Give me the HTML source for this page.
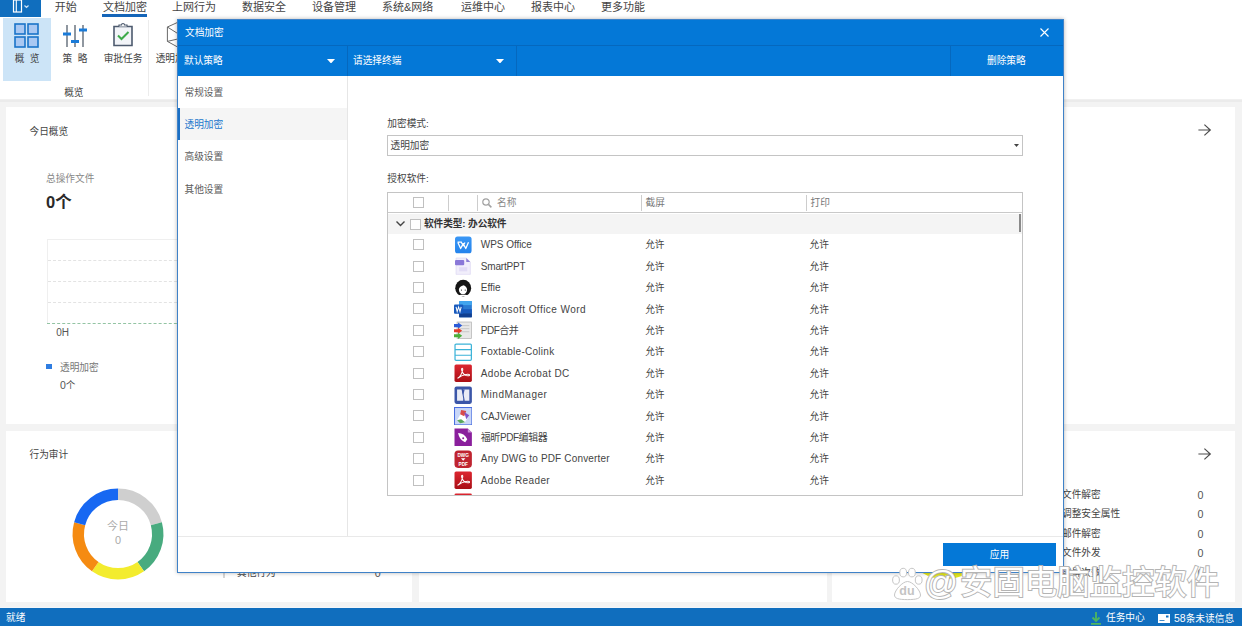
<!DOCTYPE html>
<html lang="zh-CN"><head><meta charset="utf-8"><title>文档加密</title>
<style>
*{box-sizing:border-box;margin:0;padding:0}
html,body{width:1242px;height:626px;overflow:hidden;background:#f3f3f3}
body{font-family:"Liberation Sans","Noto Sans CJK SC",sans-serif;font-size:9.7px;color:#444;position:relative}
.abs{position:absolute}
.t{position:absolute;white-space:nowrap;line-height:1}
/* top menu */
#menubar{position:absolute;left:0;top:0;width:1242px;height:17px;background:#fff}
#appbtn{position:absolute;left:0;top:0;width:41px;height:16.500px;background:#106ebe}
.mi{position:absolute;top:.7px;font-size:11px;line-height:13px;color:#444;white-space:nowrap}
#ribbon{position:absolute;left:0;top:17px;width:1242px;height:82px;background:#fff;border-bottom:1px solid #f0f0f0;box-sizing:content-box}
#rband{position:absolute;left:0;top:99.500px;width:1242px;height:2px;background:#ebebeb}
.rl{position:absolute;top:36px;font-size:9.7px;line-height:11px;color:#444;white-space:nowrap;text-align:center}
.card{position:absolute;background:#fff}
#status{position:absolute;left:0;top:607px;width:1242px;height:19px;border-top:1px solid #f3f7fb;background:#106ebe;color:#fff;font-size:9.7px}
/* dialog */
#dlg{position:absolute;left:177px;top:19px;width:887px;height:554px;background:#fff;border:1px solid #3f82c8;box-shadow:0 0 4px rgba(0,0,0,.3)}
#ttl{position:absolute;left:0;top:0;width:885px;height:25px;background:#0478d7}
#tb{position:absolute;left:0;top:25px;width:885px;height:31px;background:#0478d7;border-top:1px solid #0568be}
.tbsep{position:absolute;top:0;width:1px;height:30px;background:#0568be}
.w{color:#fff}
#side{position:absolute;left:0;top:56px;width:170px;height:460px;border-right:1px solid #e6e6e6}
.si{position:absolute;left:0;width:169px;height:32px;line-height:34px;padding-left:6.500px;font-size:9.7px;color:#5c5c5c}
.si.sel{background:#f5f5f5;color:#2277cc;border-left:2px solid #1a6fc4;padding-left:4.500px}
#foot{position:absolute;left:0;top:516px;width:885px;height:36px;border-top:1px solid #e9e9e9}
#apply{position:absolute;left:765px;top:6px;width:113px;height:23px;background:#0478d7;color:#fff;text-align:center;line-height:23px;font-size:9.7px}
#combo{position:absolute;left:209px;top:115px;width:636px;height:21px;border:1px solid #c4c4c4;background:#fff}
#grid{position:absolute;left:209px;top:172px;width:636px;height:304px;border:1px solid #c4c4c4;background:#fff;overflow:hidden}
#ghead{position:absolute;left:0;top:0;width:634px;height:20px;border-bottom:1px solid #c9c9c9}
.hs{position:absolute;top:2px;width:1px;height:16px;background:#cdcdcd}
.cb{position:absolute;width:11px;height:11px;border:1px solid #c0c0c0;background:#fff}
#grp{position:absolute;left:0;top:21px;width:634px;height:20px;background:#f4f4f4}
.row{position:absolute;left:0;width:633px;height:21.42px;font-size:10px;color:#444}
.row .ic{position:absolute;left:65.600px;top:1.400px;width:18.400px;height:18.400px}
.row .ic svg{width:18.400px;height:18.400px;display:block}
.row .nm{position:absolute;left:92.800px;top:0;line-height:21.42px;white-space:nowrap}
.row .c2{position:absolute;left:257.200px;top:0;line-height:21.42px;font-size:9.7px}
.row .c3{position:absolute;left:421.600px;top:0;line-height:21.42px;font-size:9.7px}
</style></head><body>
<!-- MENU -->
<div id="menubar">
<div id="appbtn"><svg class="abs" style="left:12px;top:-.5px" width="22" height="14" viewBox="0 0 22 14"><rect x="1.500" y="0" width="8" height="12" fill="none" stroke="#fff" stroke-width="1.200"/><path d="M4.300 0v12" stroke="#fff" stroke-width="1.100"/><path d="M12.500 5.500l2 2 2-2" stroke="#cfe2f5" stroke-width="1.200" fill="none"/></svg></div>
<span class="mi" style="left:54.800px">开始</span>
<span class="mi" style="left:103px">文档加密</span>
<div class="abs" style="left:102px;top:14px;width:45px;height:2.500px;background:#1565b8"></div>
<span class="mi" style="left:172px">上网行为</span>
<span class="mi" style="left:242px">数据安全</span>
<span class="mi" style="left:312px">设备管理</span>
<span class="mi" style="left:382px">系统&amp;网络</span>
<span class="mi" style="left:461px">运维中心</span>
<span class="mi" style="left:531px">报表中心</span>
<span class="mi" style="left:601px">更多功能</span>
</div>
<!-- RIBBON -->
<div id="ribbon">
<div class="abs" style="left:3px;top:1px;width:48px;height:63px;background:#cce4f7"></div>
<svg class="abs" style="left:14px;top:6px" width="25" height="25" viewBox="0 0 25 25"><g fill="#a9c8f2" stroke="#1a74c8" stroke-width="1.600"><rect x="1" y="1" width="10" height="10"/><rect x="14" y="1" width="10" height="10"/><rect x="1" y="14" width="10" height="10"/><rect x="14" y="14" width="10" height="10"/></g></svg>
<span class="rl" style="left:3px;width:48px;word-spacing:2.600px">概 览</span>
<svg class="abs" style="left:62px;top:7px" width="26" height="25" viewBox="0 0 26 25"><path d="M5 1v22M13 1v22M21 1v22" stroke="#55606e" stroke-width="1.300"/><path d="M1 10h8M9 17.500h8M17 6h8" stroke="#1a7bd8" stroke-width="3"/></svg>
<span class="rl" style="left:51px;width:48px;word-spacing:3px">策 略</span>
<svg class="abs" style="left:112px;top:5px" width="22" height="26" viewBox="0 0 22 26"><path d="M2 4.500h18v19H2z" fill="#f2f4f8" stroke="#4d5a6e" stroke-width="1.600"/><path d="M7 4.500V3h2.500a1.500 1.500 0 0 1 3 0H15v1.500" fill="#fff" stroke="#4d5a6e" stroke-width="1.200"/><path d="M6 13.500l3.500 3.500 7-7" stroke="#3daa4a" stroke-width="2" fill="none"/></svg>
<span class="rl" style="left:98px;width:50px">审批任务</span>
<div class="abs" style="left:148px;top:3px;width:1px;height:76px;background:#ececec"></div>
<svg class="abs" style="left:164px;top:3px" width="24" height="30" viewBox="0 0 24 30"><path d="M3.400 7v14.400M3.400 7l12-5.400M3.400 7l12 7.600M3.400 21.400l12-2.800M3.400 21.400l12 6.600" fill="none" stroke="#6a6a6a" stroke-width="1"/></svg>
<span class="rl" style="left:155.700px;text-align:left">透明加密</span>
<span class="t" style="left:64.200px;top:71px;font-size:9.7px;color:#444">概览</span>
</div>
<div id="rband"></div>
<!-- BACKGROUND CARDS -->
<div class="card" style="left:6px;top:107px;width:1229px;height:317px"></div>
<div class="card" style="left:6px;top:431px;width:406px;height:170.600px"></div>
<div class="card" style="left:418.500px;top:431px;width:408px;height:170.600px"></div>
<div class="card" style="left:832px;top:431px;width:403px;height:170.600px"></div>
<span class="t" style="left:29.500px;top:127px;font-size:9.7px;color:#444">今日概览</span>
<span class="t" style="left:46px;top:173.500px;font-size:9.7px;color:#888">总操作文件</span>
<span class="t" style="left:46px;top:194px;font-size:16.500px;font-weight:bold;color:#2a2a2a">0个</span>
<div class="abs" style="left:47px;top:239px;width:140px;height:84px;border:1px solid #efefef;border-bottom:none"></div>
<div class="abs" style="left:48px;top:260px;width:139px;height:0;border-top:1px dashed #e3e3e3"></div>
<div class="abs" style="left:48px;top:281px;width:139px;height:0;border-top:1px dashed #e3e3e3"></div>
<div class="abs" style="left:48px;top:302px;width:139px;height:0;border-top:1px dashed #e3e3e3"></div>
<div class="abs" style="left:47px;top:322.500px;width:140px;height:0;border-top:1.500px dashed #93c4a3"></div>
<span class="t" style="left:56.300px;top:327.500px;font-size:10px;color:#555">0H</span>
<div class="abs" style="left:46px;top:364px;width:6px;height:5px;background:#2f7de1"></div>
<span class="t" style="left:60px;top:363.300px;font-size:9.7px;color:#777">透明加密</span>
<span class="t" style="left:60px;top:379.500px;font-size:9.7px;color:#555"><span style="font-size:10.500px">0</span>个</span>
<svg class="abs" style="left:1197px;top:123.400px" width="16" height="14" viewBox="0 0 16 14"><path d="M1.400 7h11.900M7.400 1.600L13.300 7l-5.900 5.400" stroke="#4c4c4c" stroke-width="1.200" fill="none"/></svg>
<svg class="abs" style="left:1197px;top:447.300px" width="16" height="14" viewBox="0 0 16 14"><path d="M1.400 7h11.900M7.400 1.600L13.300 7l-5.900 5.400" stroke="#4c4c4c" stroke-width="1.200" fill="none"/></svg>
<span class="t" style="left:29.500px;top:450px;font-size:9.7px;color:#444">行为审计</span>
<svg class="abs" style="left:69.700px;top:486.200px" width="96" height="96" viewBox="-48.300 -48.300 96.600 96.600">
<g fill="none" stroke-width="11.500">
<path d="M0 -40A40 40 0 0 1 38.600 -10.400" stroke="#cfcfcf"/>
<path d="M38.600 -10.400A40 40 0 0 1 22.900 32.800" stroke="#48ab7f"/>
<path d="M22.900 32.800A40 40 0 0 1 -22.900 32.800" stroke="#f3ec2e"/>
<path d="M-22.900 32.800A40 40 0 0 1 -38.600 -10.400" stroke="#f58b12"/>
<path d="M-38.600 -10.400A40 40 0 0 1 0 -40" stroke="#1768f2"/>
</g>
<text x="0" y="-4" text-anchor="middle" font-size="11" fill="#aaa">今日</text>
<text x="0" y="10" text-anchor="middle" font-size="11" fill="#aaa">0</text>
</svg>
<div class="abs" style="left:222.700px;top:569px;width:2px;height:9px;background:#d6d6d6"></div>
<span class="t" style="left:237px;top:568px;font-size:9.7px;color:#444">其他行为</span>
<span class="t" style="left:374.800px;top:568px;font-size:10.700px;color:#555">0</span>
<span class="t" style="left:1062px;top:490px;font-size:9.7px;color:#444">文件解密</span><span class="t" style="left:1197.500px;top:489.5px;font-size:10.700px;color:#555">0</span>
<span class="t" style="left:1062px;top:509px;font-size:9.7px;color:#444">调整安全属性</span><span class="t" style="left:1197.500px;top:508.5px;font-size:10.700px;color:#555">0</span>
<span class="t" style="left:1062px;top:529px;font-size:9.7px;color:#444">邮件解密</span><span class="t" style="left:1197.500px;top:528.5px;font-size:10.700px;color:#555">0</span>
<span class="t" style="left:1062px;top:548px;font-size:9.7px;color:#444">文件外发</span><span class="t" style="left:1197.500px;top:547.5px;font-size:10.700px;color:#555">0</span>
<span class="t" style="left:1062px;top:568px;font-size:9.7px;color:#444">截屏次数</span><span class="t" style="left:1197.500px;top:567.5px;font-size:10.700px;color:#555">0</span>
<svg class="abs" style="left:895px;top:485px" width="100" height="100" viewBox="-50 -50 100 100"><circle cx="0" cy="0" r="38.500" fill="none" stroke="#e2e61e" stroke-width="11.500"/></svg>
<!-- STATUS -->
<div id="status"><span class="t" style="left:6px;top:5px">就绪</span>
<svg class="abs" style="left:1089.500px;top:3.500px" width="12" height="13" viewBox="0 0 12 13"><path d="M6 0v9M2.500 5.500L6 9l3.500-3.500M1 11.800h10" stroke="#4db660" stroke-width="1.800" fill="none"/></svg>
<span class="t" style="left:1106px;top:5px">任务中心</span>
<svg class="abs" style="left:1158px;top:5.500px" width="12" height="9" viewBox="0 0 12 9"><rect width="12" height="9" fill="#fff"/><rect x="8" y="1.500" width="2.500" height="2" fill="#106ebe"/><path d="M1.500 6.500h5" stroke="#106ebe" stroke-width=".8"/></svg>
<span class="t" style="left:1174px;top:5px"><span style="font-size:10.500px">58</span>条未读信息</span>
</div>
<!-- DIALOG -->
<div id="dlg">
<div id="ttl"><span class="t w" style="left:7px;top:8px;font-size:9.7px">文档加密</span>
<svg class="abs" style="left:862px;top:8px" width="9" height="9" viewBox="0 0 9 9"><path d="M.5 .5l8 8M8.500 .5l-8 8" stroke="#fff" stroke-width="1.100"/></svg></div>
<div id="tb">
<span class="t w" style="left:6px;top:10px;font-size:9.7px">默认策略</span>
<svg class="abs" style="left:148.700px;top:12.600px" width="8" height="4.500" viewBox="0 0 9 5"><path d="M0 0h9L4.500 5z" fill="#fff"/></svg>
<div class="tbsep" style="left:169px"></div>
<span class="t w" style="left:175px;top:10px;font-size:9.7px">请选择终端</span>
<svg class="abs" style="left:317.700px;top:12.600px" width="8" height="4.500" viewBox="0 0 9 5"><path d="M0 0h9L4.500 5z" fill="#fff"/></svg>
<div class="tbsep" style="left:338px"></div>
<div class="tbsep" style="left:772px"></div>
<span class="t w" style="left:809px;top:10px;font-size:9.7px">删除策略</span>
</div>
<div id="side">
<div class="si" style="top:0">常规设置</div>
<div class="si sel" style="top:32px">透明加密</div>
<div class="si" style="top:64px">高级设置</div>
<div class="si" style="top:97px">其他设置</div>
</div>
<span class="t" style="left:209.300px;top:98.500px;font-size:9.7px;color:#444">加密模式:</span>
<div id="combo"><span class="t" style="left:2.500px;top:5px;font-size:9.7px;color:#444">透明加密</span>
<svg class="abs" style="left:626px;top:8px" width="5" height="3" viewBox="0 0 5 3"><path d="M0 0h5L2.500 3z" fill="#444"/></svg></div>
<span class="t" style="left:209.300px;top:153.500px;font-size:9.7px;color:#444">授权软件:</span>
<div id="grid">
<div id="ghead">
<span class="cb" style="left:25px;top:4px"></span>
<div class="hs" style="left:60px"></div><div class="hs" style="left:89px"></div><div class="hs" style="left:253px"></div><div class="hs" style="left:418px"></div>
<svg class="abs" style="left:94px;top:5px" width="10" height="10" viewBox="0 0 10 10"><circle cx="4" cy="4" r="3.200" fill="none" stroke="#a2a2a2" stroke-width="1.200"/><path d="M6.400 6.400l3 3" stroke="#a2a2a2" stroke-width="1.500"/></svg>
<span class="t" style="left:109px;top:5px;font-size:9.7px;color:#888">名称</span>
<span class="t" style="left:257.500px;top:5px;font-size:9.7px;color:#777">截屏</span>
<span class="t" style="left:422.500px;top:5px;font-size:9.7px;color:#777">打印</span>
</div>
<div id="grp">
<svg class="abs" style="left:8px;top:7px" width="9" height="6" viewBox="0 0 9 6"><path d="M.5 .5l4 4 4-4" stroke="#444" stroke-width="1.400" fill="none"/></svg>
<span class="cb" style="left:22px;top:5px"></span>
<span class="t" style="left:36px;top:5px;font-size:9.7px;font-weight:bold;color:#333;letter-spacing:-.1px">软件类型: 办公软件</span>
</div>
<div id="rows" style="position:absolute;left:0;top:-193px">
<div class="row" style="top:234.29px">
<span class="cb" style="left:24.500px;top:4.800px"></span>
<span class="ic"><svg viewBox="0 0 18 18"><defs><linearGradient id="gw" x1="0" y1="0" x2="0" y2="1"><stop offset="0" stop-color="#3a97f5"/><stop offset="1" stop-color="#2483ec"/></linearGradient></defs><rect x="1" y="0.500" width="16.200" height="16.500" rx="2.500" fill="url(#gw)"/><path d="M3.500 6h4.200M3.800 6.300l2.700 6 2.500-4.800 2.500 4.800 2.700-6.300M7.300 6.300L9 9.500l1.700-3.200" stroke="#fff" stroke-width="1.250" fill="none" stroke-linejoin="round"/></svg></span>
<span class="nm" style="letter-spacing:-0.05px">WPS Office</span><span class="c2">允许</span><span class="c3">允许</span></div><div class="row" style="top:255.71px">
<span class="cb" style="left:24.500px;top:4.800px"></span>
<span class="ic"><svg viewBox="0 0 18 18"><path d="M2 1h10l4 4v12H2z" fill="#f1eefb" stroke="#d8d2f0" stroke-width=".6"/><path d="M12 1l4 4h-4z" fill="#8e7fd6"/><rect x="1" y="3" width="9" height="5" rx="1" fill="#8a78d8"/><rect x="5" y="10" width="8" height="4" fill="#e2dcf6"/></svg></span>
<span class="nm" style="letter-spacing:-0.19px">SmartPPT</span><span class="c2">允许</span><span class="c3">允许</span></div><div class="row" style="top:277.13px">
<span class="cb" style="left:24.500px;top:4.800px"></span>
<span class="ic"><svg viewBox="0 0 18 18"><ellipse cx="9" cy="9" rx="7.800" ry="8.200" fill="#161616"/><path d="M4.800 10.500c0-2 1.600-3.600 4.700-4.300 1.800.8 3.300 2.300 3.300 4.300 0 2.600-1.800 4.500-4 4.500s-4-1.900-4-4.500z" fill="#fff"/><path d="M3 17c1.500-1.200 3.500-1.600 6-1.600s4.500.4 6 1.600z" fill="#fff"/><circle cx="7.300" cy="10.800" r=".6" fill="#333"/><circle cx="11" cy="10.800" r=".6" fill="#333"/></svg></span>
<span class="nm" style="letter-spacing:-0.04px">Effie</span><span class="c2">允许</span><span class="c3">允许</span></div><div class="row" style="top:298.55px">
<span class="cb" style="left:24.500px;top:4.800px"></span>
<span class="ic"><svg viewBox="0 0 18 18"><rect x="5" y="1" width="12.5" height="16" rx="1" fill="#2b7cd3"/><rect x="5" y="1" width="12.5" height="4" fill="#41a5ee"/><rect x="5" y="9" width="12.5" height="4" fill="#185abd"/><rect x="5" y="13" width="12.5" height="4" fill="#103f91"/><rect x="0" y="4.5" width="9" height="9" rx="1" fill="#185abd"/><path d="M2 6.8l1.1 4.6 1.4-4.6 1.4 4.6L7 6.8" stroke="#fff" stroke-width="1" fill="none"/></svg></span>
<span class="nm" style="letter-spacing:0.45px">Microsoft Office Word</span><span class="c2">允许</span><span class="c3">允许</span></div><div class="row" style="top:319.97px">
<span class="cb" style="left:24.500px;top:4.800px"></span>
<span class="ic"><svg viewBox="0 0 18 18"><rect x="3" y="1" width="14" height="16" fill="#e8e8e8" stroke="#b0b0b0" stroke-width=".7"/><rect x="6" y="4" width="9" height="1" fill="#c8c8c8"/><rect x="6" y="7" width="9" height="1" fill="#c8c8c8"/><rect x="6" y="10" width="9" height="1" fill="#c8c8c8"/><path d="M0 3h4V1.5L8 4.5 4 7.5V6H0z" fill="#2a5bd8"/><path d="M0 8h4V6.5L8 9.500 4 12.500V11H0z" fill="#e23c2c"/><path d="M0 13h4v-1.500L8 14.500 4 17.500V16H0z" fill="#4caf3a"/></svg></span>
<span class="nm" style="letter-spacing:-0.52px">PDF合并</span><span class="c2">允许</span><span class="c3">允许</span></div><div class="row" style="top:341.39px">
<span class="cb" style="left:24.500px;top:4.800px"></span>
<span class="ic"><svg viewBox="0 0 18 18"><rect x="1" y="1" width="16" height="16" rx="1" fill="#fff" stroke="#3bb3d8" stroke-width="1.2"/><path d="M1 6.500h16M1 12h16" stroke="#3bb3d8" stroke-width="1.200"/></svg></span>
<span class="nm" style="letter-spacing:0.28px">Foxtable-Colink</span><span class="c2">允许</span><span class="c3">允许</span></div><div class="row" style="top:362.81px">
<span class="cb" style="left:24.500px;top:4.800px"></span>
<span class="ic"><svg viewBox="0 0 18 18"><defs><linearGradient id="ga" x1="0" y1="0" x2="0" y2="1"><stop offset="0" stop-color="#dc2630"/><stop offset="1" stop-color="#a90f16"/></linearGradient></defs><rect x="0.500" y="0.500" width="17" height="17" rx="1.500" fill="url(#ga)"/><path d="M3.500 14c2-1 4-4 5-8 .5-2.500-1.500-2.500-1 0 .6 3 3.500 6 7 5.500 1.500-.5.500-1.800-1.500-1.500-3 .4-7 2-9.500 4z" stroke="#fff" stroke-width="1" fill="none"/></svg></span>
<span class="nm" style="letter-spacing:0.38px">Adobe Acrobat DC</span><span class="c2">允许</span><span class="c3">允许</span></div><div class="row" style="top:384.23px">
<span class="cb" style="left:24.500px;top:4.800px"></span>
<span class="ic"><svg viewBox="0 0 18 18"><rect x="0.500" y="0.500" width="17" height="17" rx="2" fill="#3b56a8"/><path d="M3 3.500h4.500L9 12V3.500h0L10.500 3.500H15V14.500H10.500L9 6v8.500H3z" fill="#e9ecf5"/><path d="M7.500 3.500L9 9l1.500-5.500z" fill="#3b56a8"/></svg></span>
<span class="nm" style="letter-spacing:0.49px">MindManager</span><span class="c2">允许</span><span class="c3">允许</span></div><div class="row" style="top:405.65px">
<span class="cb" style="left:24.500px;top:4.800px"></span>
<span class="ic"><svg viewBox="0 0 18 18"><rect x="0.500" y="0.500" width="17" height="17" fill="#c9d7f7" stroke="#4a6ee0" stroke-width="1"/><path d="M3 13l5-9 7 4-5 8z" fill="#fff"/><path d="M7 3l5 1-2 5-4-2z" fill="#d94a4a"/><path d="M10 5l5 3-3 4z" fill="#7c55c8"/><path d="M3 13l4-1 4 3-5 1z" fill="#58a85c"/></svg></span>
<span class="nm" style="letter-spacing:0.05px">CAJViewer</span><span class="c2">允许</span><span class="c3">允许</span></div><div class="row" style="top:427.07px">
<span class="cb" style="left:24.500px;top:4.800px"></span>
<span class="ic"><svg viewBox="0 0 18 18"><path d="M0.500 0.500h13l4 4v13h-17z" fill="#8a1f9c"/><path d="M13.500 0.500l4 4h-4z" fill="#c98bd6"/><path d="M4 5c4 0 7 2 9 6l-2 3c-3-1-6-4-7-9z" fill="#fff"/><circle cx="9" cy="10" r="1" fill="#8a1f9c"/></svg></span>
<span class="nm" style="letter-spacing:-0.44px">福昕PDF编辑器</span><span class="c2">允许</span><span class="c3">允许</span></div><div class="row" style="top:448.49px">
<span class="cb" style="left:24.500px;top:4.800px"></span>
<span class="ic"><svg viewBox="0 0 18 18"><rect x="0.500" y="0.500" width="17" height="17" rx="3.500" fill="#bf2430"/><text x="9" y="6.800" font-size="4.600" font-weight="bold" fill="#fff" text-anchor="middle" font-family="Liberation Sans, sans-serif">DWG</text><path d="M6.800 8h4.400L9 10.600z" fill="#fff"/><text x="9" y="15.600" font-size="4.600" font-weight="bold" fill="#fff" text-anchor="middle" font-family="Liberation Sans, sans-serif">PDF</text></svg></span>
<span class="nm" style="letter-spacing:0.16px">Any DWG to PDF Converter</span><span class="c2">允许</span><span class="c3">允许</span></div><div class="row" style="top:469.91px">
<span class="cb" style="left:24.500px;top:4.800px"></span>
<span class="ic"><svg viewBox="0 0 18 18"><defs><linearGradient id="ga" x1="0" y1="0" x2="0" y2="1"><stop offset="0" stop-color="#dc2630"/><stop offset="1" stop-color="#a90f16"/></linearGradient></defs><rect x="0.500" y="0.500" width="17" height="17" rx="1.500" fill="url(#ga)"/><path d="M3.500 14c2-1 4-4 5-8 .5-2.500-1.500-2.500-1 0 .6 3 3.500 6 7 5.500 1.500-.5.500-1.800-1.500-1.500-3 .4-7 2-9.500 4z" stroke="#fff" stroke-width="1" fill="none"/></svg></span>
<span class="nm" style="letter-spacing:0.4px">Adobe Reader</span><span class="c2">允许</span><span class="c3">允许</span></div><div class="row" style="top:491.33px">
<span class="ic"><svg viewBox="0 0 18 18"><defs><linearGradient id="ga" x1="0" y1="0" x2="0" y2="1"><stop offset="0" stop-color="#dc2630"/><stop offset="1" stop-color="#a90f16"/></linearGradient></defs><rect x="0.500" y="0.500" width="17" height="17" rx="1.500" fill="url(#ga)"/><path d="M3.500 14c2-1 4-4 5-8 .5-2.500-1.500-2.500-1 0 .6 3 3.500 6 7 5.500 1.500-.5.500-1.800-1.500-1.500-3 .4-7 2-9.500 4z" stroke="#fff" stroke-width="1" fill="none"/></svg></span></div>
</div>
<div class="abs" style="left:631px;top:21px;width:2px;height:18px;background:#8a8a8a"></div>
</div>
<div id="foot"><div id="apply">应用</div></div>
</div>
<!-- WATERMARK -->
<svg class="abs" style="left:880px;top:560px" width="362" height="48" viewBox="0 0 362 48">
<g fill="#fff" stroke="#c6c6c6" stroke-width="1"><ellipse cx="16" cy="20" rx="3.400" ry="4.200"/><ellipse cx="23.200" cy="12.600" rx="3.400" ry="4.300"/><ellipse cx="31.900" cy="12.600" rx="3.400" ry="4.300"/><ellipse cx="38.700" cy="20" rx="3.400" ry="4.200"/><path d="M27.500 21.500c5 0 13 9 13 13.500 0 3.500-4 4.600-13 4.600s-13-1.100-13-4.600c0-4.500 8-13.500 13-13.500z"/></g>
<text x="19.300" y="35.300" font-size="12.500" font-weight="bold" fill="#c4c4c4" font-family="Liberation Sans, sans-serif">du</text>
<g fill="#fff" stroke="#b4b4b4" stroke-width="2" paint-order="stroke" font-family="Liberation Sans, Noto Sans CJK SC, sans-serif">
<text x="44" y="34" font-size="33.500">@</text>
<text x="80" y="34.300" font-size="32.400">安固电脑监控软件</text>
</g>
</svg>
</body></html>
